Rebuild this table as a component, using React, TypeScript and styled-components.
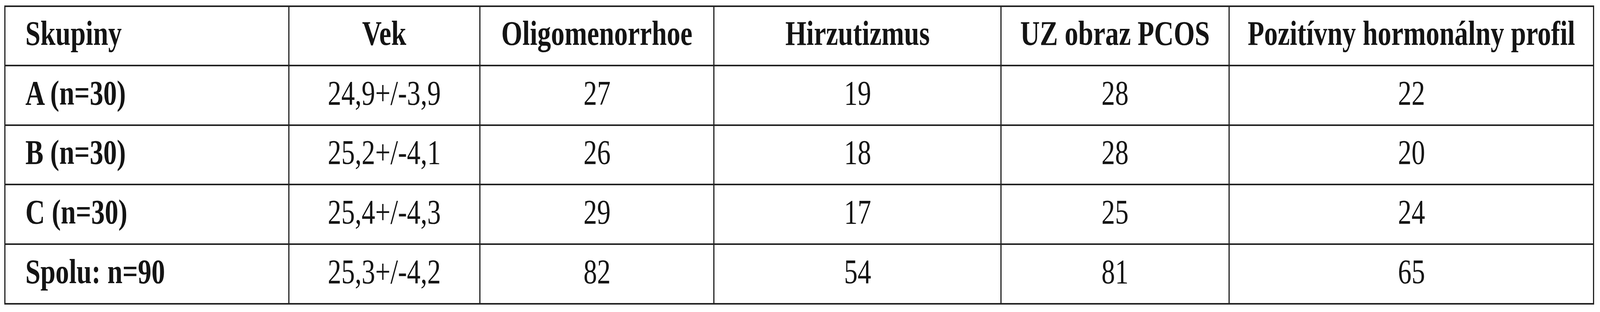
import React from "react";
import styled, { createGlobalStyle } from "styled-components";

/* The browser viewport is capped at 4096px wide while the reference is 5258px wide,
   so the horizontal axis is laid out at 4096/5258 of the reference and the text is
   condensed by the same factor; the vertical axis is kept 1:1. */
const SX = 4096 / 5258;

const Global = createGlobalStyle`
  html, body { margin: 0; padding: 0; background: #ffffff; }
  body { padding: 14px 0 0 11px; overflow: hidden; }
`;

const Table = styled.div`
  display: grid;
  grid-template-columns: 724px 486px 596px 732px 581px 930px;
  grid-template-rows: 148px 149px 148px 149px 149px;
  gap: 4px 3px;
  padding: 4px 3px;
  background: #222222;
  width: max-content;
`;

const Cell = styled.div<{ $align?: "left" | "center"; $bold?: boolean }>`
  background: #ffffff;
  min-width: 0;
  display: flex;
  align-items: center;
  justify-content: ${(p) => (p.$align === "left" ? "flex-start" : "center")};
  padding: 0 0 14px ${(p) => (p.$align === "left" ? "51px" : "0")};
  box-sizing: border-box;
  font-family: "Liberation Serif", "Times New Roman", serif;
  font-size: 89px;
  font-weight: ${(p) => (p.$bold ? 700 : 400)};
  color: #141414;
  white-space: nowrap;
`;

const Text = styled.span<{ $align?: "left" | "center" }>`
  display: inline-block;
  transform: scaleX(${SX});
  transform-origin: ${(p) => (p.$align === "left" ? "left center" : "center center")};
`;

const headers = [
  "Skupiny",
  "Vek",
  "Oligomenorrhoe",
  "Hirzutizmus",
  "UZ obraz PCOS",
  "Pozitívny hormonálny profil",
];

const rows: string[][] = [
  ["A (n=30)", "24,9+/-3,9", "27", "19", "28", "22"],
  ["B (n=30)", "25,2+/-4,1", "26", "18", "28", "20"],
  ["C (n=30)", "25,4+/-4,3", "29", "17", "25", "24"],
  ["Spolu: n=90", "25,3+/-4,2", "82", "54", "81", "65"],
];

export default function App() {
  return (
    <>
      <Global />
      <Table>
        {headers.map((h, i) => {
          const align = i === 0 ? "left" : "center";
          return (
            <Cell key={h} $bold $align={align}>
              <Text $align={align}>{h}</Text>
            </Cell>
          );
        })}
        {rows.map((r) =>
          r.map((v, i) => {
            const align = i === 0 ? "left" : "center";
            return (
              <Cell key={r[0] + i} $bold={i === 0} $align={align}>
                <Text $align={align}>{v}</Text>
              </Cell>
            );
          })
        )}
      </Table>
    </>
  );
}
